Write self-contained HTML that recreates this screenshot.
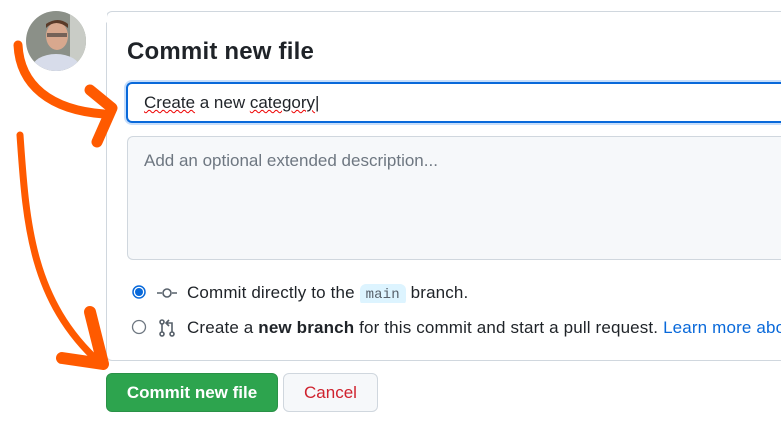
<!DOCTYPE html>
<html><head><meta charset="utf-8"><style>
body{margin:0;width:781px;height:441px;background:#fff;position:relative;overflow:hidden;font-family:"Liberation Sans",sans-serif;color:#1f2328}
.panel{position:absolute;left:106px;top:11px;width:675px;height:350px;border:1px solid #d0d7de;border-right:none;border-radius:6px 0 0 6px;box-sizing:border-box}
.title{position:absolute;left:127px;top:38px;font-size:24px;font-weight:600;letter-spacing:.2px}
.inp{position:absolute;left:126px;top:82px;width:655px;height:41px;border:2px solid #0969da;border-right:none;border-radius:6px 0 0 6px;box-sizing:border-box;box-shadow:0 0 0 2px #c7defb}
.inp span{position:absolute;left:16px;top:9px;font-size:17px}
.ta{position:absolute;left:127px;top:136px;width:654px;height:124px;border:1px solid #d0d7de;border-right:none;border-radius:6px 0 0 6px;background:#f6f8fa;box-sizing:border-box}
.ta span{position:absolute;left:16px;top:14px;font-size:17px;color:#6e7781}
.row{position:absolute;font-size:17px;white-space:nowrap;letter-spacing:.15px;overflow:hidden;width:594px}
.code{font-family:"Liberation Mono",monospace;font-size:14px;background:#ddf4ff;padding:3px 6px;border-radius:6px;color:#57606a}
.btn{position:absolute;top:373px;height:39px;border-radius:6px;box-sizing:border-box;font-size:17px;line-height:37px;text-align:center}
</style></head><body>
<div class="panel"></div>
<svg style="position:absolute;left:0;top:0" width="781" height="441">
<defs><clipPath id="c"><circle cx="56" cy="41" r="30"/></clipPath></defs>
<g clip-path="url(#c)"><rect x="26" y="11" width="60" height="60" fill="#8b9088"/><rect x="70" y="11" width="16" height="60" fill="#c9ccc6"/><ellipse cx="56" cy="68" rx="24" ry="14" fill="#d7dcea"/><ellipse cx="57" cy="36" rx="11" ry="14" fill="#d8a88e"/><path d="M46 28q10-10 22 0v-4q-10-8-22 0z" fill="#5a3a28"/><rect x="47" y="33" width="20" height="4" fill="#333" opacity=".6"/></g>
<path d="M101 17l6 -6v12z" fill="#fff"/>
<g fill="none" stroke="#ff5a00" stroke-linecap="round">
<path d="M18 45 C20 85 50 110 104 114" stroke-width="9"/>
<path d="M90 90 L112 108 L97 142" stroke-width="11" stroke-linejoin="round"/>
<path d="M20 135 C26 220 30 300 100 363" stroke-width="7"/>
<path d="M90 312 L103 364 L62 358" stroke-width="12" stroke-linejoin="round"/>
</g>
<circle cx="139" cy="292" r="6" fill="#fff" stroke="#0969da" stroke-width="1.5"/><circle cx="139" cy="292" r="4" fill="#0969da"/>
<circle cx="139" cy="327" r="6.5" fill="#fff" stroke="#6e7781" stroke-width="1.3"/>
<g stroke="#57606a" stroke-width="1.6" fill="none"><path d="M157 293h5M172 293h5"/><circle cx="167" cy="293" r="4"/>
<circle cx="162" cy="322" r="2"/><circle cx="162" cy="334" r="2"/><path d="M162 324v8"/><circle cx="172" cy="334" r="2"/><path d="M172 332v-9h-5M169 320l-3 3 3 3"/></g>
</svg>
<div class="title">Commit new file</div>
<div class="inp"><span><u style="text-decoration:underline wavy #e00;text-decoration-thickness:1px">Create</u> a new <u style="text-decoration:underline wavy #e00;text-decoration-thickness:1px">category</u><b style="font-weight:400">|</b></span></div>
<div class="ta"><span>Add an optional extended description...</span></div>
<div class="row" style="left:187px;top:283px">Commit directly to the <span class="code">main</span> branch.</div>
<div class="row" style="left:187px;top:318px">Create a <b>new branch</b> for this commit and start a pull request. <span style="color:#0969da">Learn more about pull requests</span></div>
<div class="btn" style="left:106px;width:172px;background:#2da44e;color:#fff;font-weight:600;border:1px solid #2a9147">Commit new file</div>
<div class="btn" style="left:283px;width:95px;background:#f6f8fa;color:#cf222e;border:1px solid #d0d7de">Cancel</div>
</body></html>
